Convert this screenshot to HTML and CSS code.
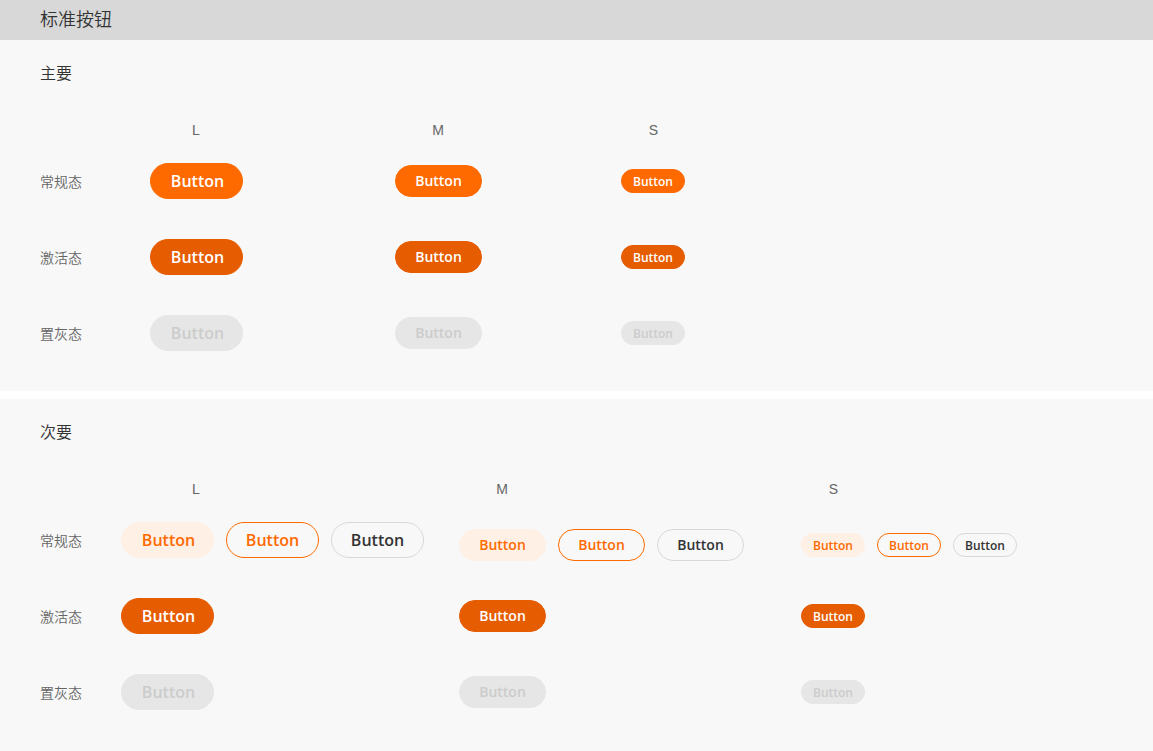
FILE: index.html
```
<!DOCTYPE html>
<html lang="zh-CN">
<head>
<meta charset="utf-8">
<title>标准按钮</title>
<link rel="stylesheet" href="styles.css">
</head>
<body>
<header class="banner"><h1 class="banner-title">标准按钮</h1></header>
<main class="sections">
<section class="panel">
<h2 class="panel-title">主要</h2>
<div class="grid grid-primary">
<span></span><span class="size size-l">L</span><span class="size size-m">M</span><span class="size size-s">S</span>
<span class="state">常规态</span>
<button class="btn btn-l primary">Button</button><button class="btn btn-m primary">Button</button><button class="btn btn-s primary">Button</button>
<span class="state">激活态</span>
<button class="btn btn-l active">Button</button><button class="btn btn-m active">Button</button><button class="btn btn-s active">Button</button>
<span class="state">置灰态</span>
<button class="btn btn-l" disabled>Button</button><button class="btn btn-m" disabled>Button</button><button class="btn btn-s" disabled>Button</button>
</div>
</section>
<section class="panel">
<h2 class="panel-title">次要</h2>
<div class="grid grid-secondary">
<span></span><span class="size size-l">L</span><span class="size size-m">M</span><span class="size size-s">S</span>
<span class="state">常规态</span>
<div class="group"><button class="btn btn-l soft">Button</button><button class="btn btn-l outline">Button</button><button class="btn btn-l neutral">Button</button></div>
<div class="group group-low"><button class="btn btn-m soft">Button</button><button class="btn btn-m outline">Button</button><button class="btn btn-m neutral">Button</button></div>
<div class="group group-low"><button class="btn btn-s soft">Button</button><button class="btn btn-s outline">Button</button><button class="btn btn-s neutral">Button</button></div>
<span class="state">激活态</span>
<button class="btn btn-l active">Button</button><button class="btn btn-m active">Button</button><button class="btn btn-s active">Button</button>
<span class="state">置灰态</span>
<button class="btn btn-l" disabled>Button</button><button class="btn btn-m" disabled>Button</button><button class="btn btn-s" disabled>Button</button>
</div>
</section>
</main>
</body>
</html>
```
FILE: styles.css
```
* {
  box-sizing: border-box;
}

body {
  margin: 0;
  background: #fff;
  color: #333;
  font-family: "Liberation Sans", "Noto Sans CJK SC", sans-serif;
  font-weight: 350;
}

.banner {
  padding: 0 40px;
  background: #d8d8d8;
}

.banner-title {
  margin: 0;
  font-size: 18px;
  font-weight: 350;
  line-height: 40px;
}

.sections {
  display: flex;
  flex-direction: column;
  gap: 8px;
}

.panel {
  padding: 22px 40px 20px;
  background: #f8f8f8;
}

.panel:last-child {
  padding-bottom: 21px;
}

.panel-title {
  margin: 0 0 34px;
  font-size: 16px;
  font-weight: 350;
  line-height: 24px;
}

.grid {
  display: grid;
  grid-template-rows: 23px repeat(3, 76px);
  align-items: center;
  justify-items: start;
}

.grid-primary {
  grid-template-columns: 110px 245px 226px 1fr;
}

.grid-secondary {
  grid-template-columns: 81px 338px 342px 1fr;
}

.size,
.state {
  color: #666;
  font-size: 14px;
  line-height: 20px;
}

.state {
  padding-top: 2px;
}

.size {
  align-self: start;
  text-align: center;
}

.size-l {
  width: 92px;
}

.size-m {
  width: 86px;
}

.size-s {
  width: 65px;
}

.grid-secondary .size-l {
  width: 150px;
}

.group {
  display: flex;
  gap: 12px;
}

.group-low {
  padding-top: 10px;
}

.btn {
  padding: 0;
  border: 1px solid transparent;
  border-radius: 18px;
  background: transparent;
  color: #fff;
  font-family: "Open Sans", "Noto Sans", sans-serif;
  font-weight: 600;
}

.btn-l {
  width: 93px;
  height: 36px;
  padding-left: 2px;
  font-size: 16px;
}

.btn-l.outline,
.btn-l.neutral {
  padding-left: 0;
}

.btn-m {
  width: 87px;
  height: 32px;
  padding-bottom: 2px;
  font-size: 14px;
}

.btn-s {
  width: 64px;
  height: 24px;
  font-size: 12px;
}

.primary {
  border-color: #ff6a00;
  background: #ff6a00;
}

.active {
  border-color: #e65c00;
  background: #e65c00;
}

.soft {
  border-color: #fff0e5;
  background: #fff0e5;
  color: #ff6a00;
}

.outline {
  border-color: #ff6a00;
  color: #ff6a00;
}

.neutral {
  border-color: #d8d8d8;
  color: #333;
}

.btn:disabled {
  border-color: #e6e6e6;
  background: #e6e6e6;
  color: #ccc;
}
```
